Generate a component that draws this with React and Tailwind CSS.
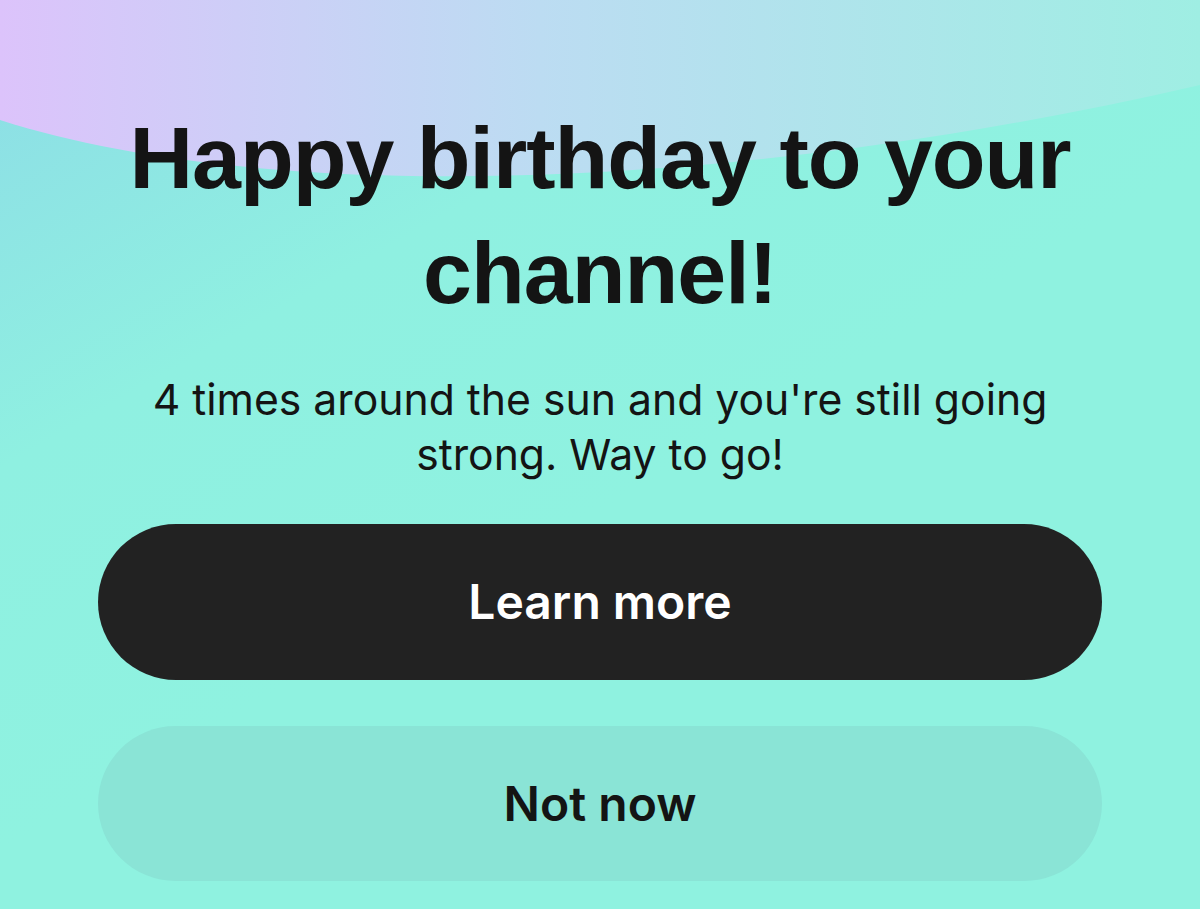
import React from "react";

const Backdrop = () => (
  <svg
    className="absolute inset-0 h-full w-full"
    viewBox="0 0 1200 909"
    preserveAspectRatio="none"
    aria-hidden="true"
  >
    <defs>
      <linearGradient id="sky" x1="0" y1="0" x2="1" y2="0">
        <stop offset="0" stopColor="#dcc3fb" />
        <stop offset="0.45" stopColor="#bcdcf2" />
        <stop offset="1" stopColor="#9feee3" />
      </linearGradient>
      <linearGradient id="mint" x1="0" y1="0" x2="0.45" y2="0.6">
        <stop offset="0" stopColor="#8ddbe6" />
        <stop offset="0.55" stopColor="#8ff0e1" />
        <stop offset="1" stopColor="#8ff2e0" />
      </linearGradient>
    </defs>
    <rect width="1200" height="909" fill="url(#mint)" />
    <path d="M0 0H1200V85C700 200 250 200 0 120Z" fill="url(#sky)" />
  </svg>
);

export default function App() {
  return (
    <div className="relative h-[909px] w-[1200px] overflow-hidden">
      <Backdrop />
      <div className="relative flex flex-col items-center px-[98px] pt-[100px]">
        <h1 className="text-center font-['Liberation_Sans',Arial,sans-serif] text-[88px] font-bold leading-[115px] tracking-[-1px] text-[#141414]">
          Happy birthday to your
          <br />
          channel!
        </h1>
        <p className="mt-[42px] text-center font-['Inter',sans-serif] text-[42.7px] leading-[55px] text-[#141414]">
          4 times around the sun and you're still going
          <br />
          strong. Way to go!
        </p>
        <button className="mt-[42px] flex h-[156px] w-full items-center justify-center rounded-full bg-[#222222] font-['Inter',sans-serif] text-[48px] font-semibold text-white">
          Learn more
        </button>
        <button className="mt-[46px] flex h-[155px] w-full items-center justify-center rounded-full bg-[#8ae4d6] font-['Inter',sans-serif] text-[48px] font-semibold text-[#141414]">
          Not now
        </button>
      </div>
    </div>
  );
}
